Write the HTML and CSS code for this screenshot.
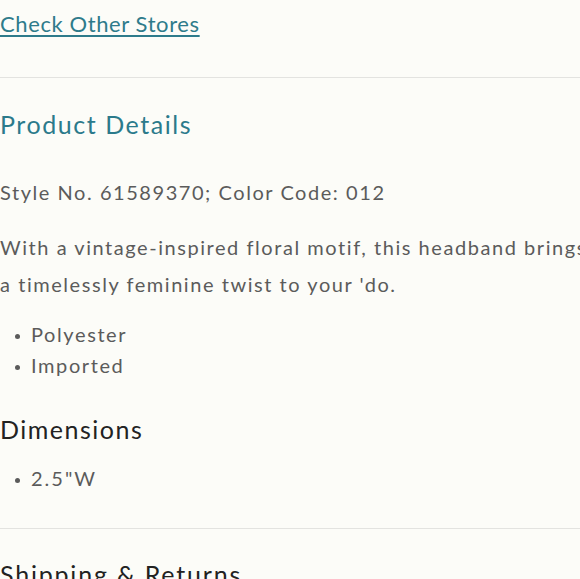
FILE: index.html
```html
<!DOCTYPE html>
<html>
<head>
<meta charset="utf-8">
<link rel="stylesheet" href="styles.css">
</head>
<body>
<div class="page">
  <a class="stores-link" href="#">Check Other Stores</a>
  <hr class="divider first">
  <h2 class="section-title">Product Details</h2>
  <p class="style-no">Style No. 61589370; Color Code: 012</p>
  <p class="description">With a vintage-inspired floral motif, this headband brings a timelessly feminine twist to your 'do.</p>
  <ul class="bullets">
    <li>Polyester</li>
    <li>Imported</li>
  </ul>
  <h3 class="sub-title">Dimensions</h3>
  <ul class="bullets dims">
    <li>2.5"W</li>
  </ul>
  <hr class="divider second">
  <h2 class="sub-title shipping">Shipping &amp; Returns</h2>
</div>
</body>
</html>
```
FILE: styles.css
```css
html, body {
  margin: 0;
  padding: 0;
  background: #fcfcf8;
}
body {
  font-family: Lato, "Open Sans", sans-serif;
  overflow: hidden;
}
.page {
  width: 600px;
  padding-top: 8.5px;
}
.stores-link {
  display: block;
  width: max-content;
  font-size: 22px;
  line-height: 30px;
  color: #2e7b8b;
  text-decoration: underline;
  text-underline-offset: 3px;
  text-decoration-thickness: 1.5px;
  letter-spacing: 0.6px;
}
.divider {
  border: 0;
  height: 1px;
  background: #e3e3e0;
  margin: 38.5px 0 0 0;
}
.divider.second {
  margin-top: 34px;
}
.section-title {
  margin: 30px 0 0 0;
  font-size: 25px;
  line-height: 32px;
  font-weight: 400;
  color: #2b7a8b;
  letter-spacing: 1.55px;
}
.style-no, .description {
  margin: 0;
  font-size: 20px;
  line-height: 37px;
  color: #5b5b5b;
  letter-spacing: 1.55px;
}
.style-no { margin-top: 33.5px; }
.description { margin-top: 18px; width: 592px; }
.bullets {
  list-style: none;
  margin: 16px 0 0 0;
  padding: 0 0 0 31px;
}
.bullets li {
  position: relative;
  font-size: 20px;
  line-height: 31px;
  color: #5b5b5b;
  letter-spacing: 1.6px;
}
.bullets li::before {
  content: "";
  position: absolute;
  left: -16px;
  top: 15px;
  width: 5px;
  height: 5px;
  border-radius: 50%;
  background: #5b5b5b;
}
.sub-title {
  margin: 32.5px 0 0 0;
  font-size: 25px;
  line-height: 32px;
  font-weight: 400;
  color: #222;
  letter-spacing: 1.5px;
}
.bullets.dims { margin-top: 17.5px; }
.bullets.dims li { letter-spacing: 2px; }
.sub-title.shipping { margin-top: 29px; letter-spacing: 1.8px; }
```
